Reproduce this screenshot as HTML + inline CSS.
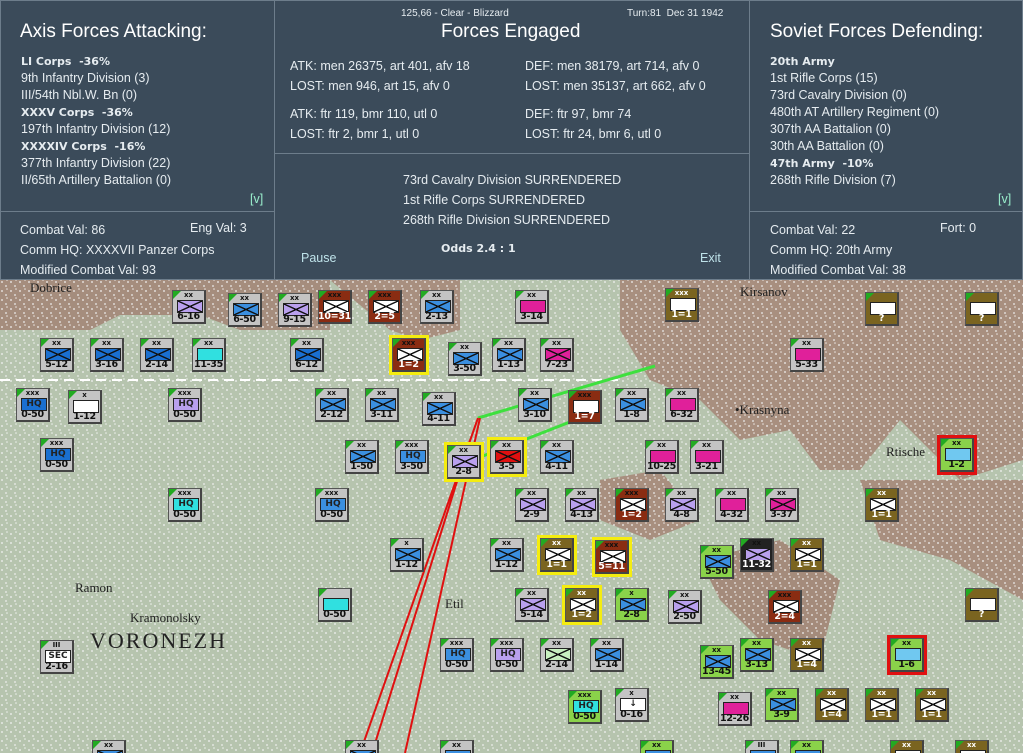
<!DOCTYPE html>
<html><head><meta charset="utf-8"><style>
*{margin:0;padding:0;box-sizing:border-box}
html,body{width:1023px;height:753px;overflow:hidden}
#w{position:relative;width:1023px;height:753px;overflow:hidden;background:#b9c6b3;font-family:"Liberation Sans",sans-serif}
.p{position:absolute;background:#3b4b5a;color:#e6ecf0;border:1px solid #6d7d8b}
.p h1{font-weight:normal;font-size:19px;color:#fff}
.t{position:absolute;font-size:12.5px;line-height:17px;white-space:nowrap}
.b{font-family:"DejaVu Sans",sans-serif;font-weight:bold;font-size:11px}
.c{position:absolute;width:34px;height:34px;background:#c4c4c4;border:1px solid #555;border-right:2px solid #444;border-bottom:2px solid #444;font-family:"DejaVu Sans",sans-serif;font-weight:bold;text-align:center;color:#111;white-space:nowrap}
.c:before{content:"";position:absolute;left:0;top:0;border-left:8px solid #2a2;border-bottom:8px solid transparent}
.c i{position:absolute;left:4px;top:9px;width:26px;height:13px;background:var(--s,#3b8fe0);border:1px solid #222;font-style:normal;font-size:9px;color:#222;line-height:11px}
.c i.x{background:linear-gradient(to top right,transparent 46%,#111 47%,#111 53%,transparent 54%),linear-gradient(to bottom right,transparent 46%,#111 47%,#111 53%,transparent 54%),var(--s,#3b8fe0)}
.c u{position:absolute;left:0;right:0;top:0;font-size:7px;text-decoration:none;line-height:9px}
.c b{position:absolute;left:-3px;right:-3px;bottom:0;font-size:9.5px;line-height:10px;letter-spacing:-.3px}
.o{background:#7a6420;color:#fff}.o i{--s:#fff}.o b,.r b,.k b{color:#fff}
.r{background:#8a2c12}.r i{--s:#fff}
.k{background:#222}
.y{outline:3px solid #f4ec10}
.rd{outline:3px solid #e01010}
</style></head><body><div id="w">
<svg width="1023" height="753" style="position:absolute;left:0;top:0">
<defs><pattern id="sn" width="9" height="9" patternUnits="userSpaceOnUse"><circle cx="2" cy="3" r="1" fill="#f4f4f4"/><circle cx="6" cy="7" r="1" fill="#eee"/><circle cx="7" cy="1" r=".8" fill="#fff"/></pattern></defs>
<rect width="1023" height="753" fill="#b6c4ae"/>
<path d="M0 280H330V330H240L200 315H120L90 330H0Z" fill="#a58d7d"/>
<path d="M620 280H1023V460L960 480L900 420L860 470H820L790 430L740 440L700 400L650 380L620 330Z" fill="#a88f7f"/>
<path d="M860 480L1023 480V600L950 560L880 540Z" fill="#a88f7f"/>
<path d="M700 560L780 540L840 580L820 660L760 640L720 600Z" fill="#a48b7b"/>
<path d="M600 480L660 470L700 520L650 540L600 520Z" fill="#a88f7f"/>
<path d="M330 280H460V330L420 340L390 330Z" fill="#a88f7f"/>
<rect width="1023" height="753" fill="url(#sn)" opacity=".75"/>
<path d="M0 380H620" stroke="#fff" stroke-width="2" stroke-dasharray="10 6"/>
<text x="90" y="648" font-family="Liberation Serif" font-size="22" fill="#222" letter-spacing="2">VORONEZH</text>
<text x="130" y="622" font-family="Liberation Serif" font-size="13" fill="#222">Kramonolsky</text>
<text x="75" y="592" font-family="Liberation Serif" font-size="13" fill="#222">Ramon</text>
<text x="735" y="414" font-family="Liberation Serif" font-size="13" fill="#222">•Krasnyna</text>
<text x="886" y="456" font-family="Liberation Serif" font-size="13" fill="#222">Rtische</text>
<text x="740" y="296" font-family="Liberation Serif" font-size="13" fill="#222">Kirsanov</text>
<text x="445" y="608" font-family="Liberation Serif" font-size="13" fill="#222">Etil</text>
<text x="30" y="292" font-family="Liberation Serif" font-size="13" fill="#222">Dobrice</text>
<path d="M478 418L655 366M460 465L575 420" stroke="#3ee03e" stroke-width="3"/>
<path d="M478 418L360 753M480 418L405 753M470 440L372 753" stroke="#e01010" stroke-width="2"/>
</svg>

<div class="p" style="left:0;top:0;width:275px;height:212px"><h1 style="position:absolute;left:19px;top:20px">Axis Forces Attacking:</h1>
<div class="t" style="left:20px;top:52px"><span class="b">LI Corps &nbsp;-36%</span><br>9th Infantry Division (3)<br>III/54th Nbl.W. Bn (0)<br><span class="b">XXXV Corps &nbsp;-36%</span><br>197th Infantry Division (12)<br><span class="b">XXXXIV Corps &nbsp;-16%</span><br>377th Infantry Division (22)<br>II/65th Artillery Battalion (0)</div>
<div class="t" style="left:249px;top:190px;color:#9ec">[v]</div></div>
<div class="p" style="left:0;top:211px;width:275px;height:69px"><div class="t" style="left:19px;top:8px;line-height:20px">Combat Val: 86<br>Comm HQ: XXXXVII Panzer Corps<br>Modified Combat Val: 93</div><div class="t" style="left:189px;top:8px">Eng Val: 3</div></div>

<div class="p" style="left:274px;top:0;width:476px;height:154px">
<div class="t" style="left:126px;top:4px;font-size:10px">125,66 - Clear - Blizzard</div><div class="t" style="left:352px;top:4px;font-size:10px">Turn:81 &nbsp;Dec 31 1942</div>
<h1 style="position:absolute;left:166px;top:20px">Forces Engaged</h1>
<div class="t" style="left:15px;top:55px;line-height:20px">ATK: men 26375, art 401, afv 18<br>LOST: men 946, art 15, afv 0</div>
<div class="t" style="left:15px;top:103px;line-height:20px">ATK: ftr 119, bmr 110, utl 0<br>LOST: ftr 2, bmr 1, utl 0</div>
<div class="t" style="left:250px;top:55px;line-height:20px">DEF: men 38179, art 714, afv 0<br>LOST: men 35137, art 662, afv 0</div>
<div class="t" style="left:250px;top:103px;line-height:20px">DEF: ftr 97, bmr 74<br>LOST: ftr 24, bmr 6, utl 0</div></div>
<div class="p" style="left:274px;top:153px;width:476px;height:127px">
<div class="t" style="left:128px;top:16px;line-height:20px">73rd Cavalry Division SURRENDERED<br>1st Rifle Corps SURRENDERED<br>268th Rifle Division SURRENDERED</div>
<div class="t b" style="left:166px;top:86px">Odds 2.4 : 1</div>
<div class="t" style="left:26px;top:96px;color:#bfe3ea">Pause</div><div class="t" style="left:425px;top:96px;color:#bfe3ea">Exit</div></div>

<div class="p" style="left:749px;top:0;width:274px;height:212px"><h1 style="position:absolute;left:20px;top:20px">Soviet Forces Defending:</h1>
<div class="t" style="left:20px;top:52px"><span class="b">20th Army</span><br>1st Rifle Corps (15)<br>73rd Cavalry Division (0)<br>480th AT Artillery Regiment (0)<br>307th AA Battalion (0)<br>30th AA Battalion (0)<br><span class="b">47th Army &nbsp;-10%</span><br>268th Rifle Division (7)</div>
<div class="t" style="left:248px;top:190px;color:#9ec">[v]</div></div>
<div class="p" style="left:749px;top:211px;width:274px;height:69px"><div class="t" style="left:20px;top:8px;line-height:20px">Combat Val: 22<br>Comm HQ: 20th Army<br>Modified Combat Val: 38</div><div class="t" style="left:190px;top:8px">Fort: 0</div></div>

<div class="c" style="left:172px;top:290px;--s:#b9a0ee"><u>xx</u><i class="x"></i><b>6-16</b></div>
<div class="c" style="left:228px;top:293px"><u>xx</u><i class="x"></i><b>6-50</b></div>
<div class="c" style="left:278px;top:293px;--s:#b9a0ee"><u>xx</u><i class="x"></i><b>9-15</b></div>
<div class="c r" style="left:318px;top:290px"><u>xxx</u><i class="x"></i><b>10=31</b></div>
<div class="c r" style="left:368px;top:290px"><u>xxx</u><i class="x"></i><b>2=5</b></div>
<div class="c" style="left:420px;top:290px"><u>xx</u><i class="x"></i><b>2-13</b></div>
<div class="c" style="left:515px;top:290px;--s:#e0209a"><u>xx</u><i></i><b>3-14</b></div>
<div class="c o" style="left:665px;top:288px"><u>xxx</u><i></i><b>1=1</b></div>
<div class="c o" style="left:865px;top:292px"><i></i><b>?</b></div>
<div class="c o" style="left:965px;top:292px"><i></i><b>?</b></div>

<div class="c" style="left:40px;top:338px;--s:#1a6fd0"><u>xx</u><i class="x"></i><b>5-12</b></div>
<div class="c" style="left:90px;top:338px;--s:#1a6fd0"><u>xx</u><i class="x"></i><b>3-16</b></div>
<div class="c" style="left:140px;top:338px;--s:#1a6fd0"><u>xx</u><i class="x"></i><b>2-14</b></div>
<div class="c" style="left:192px;top:338px;--s:#30e0e0"><u>xx</u><i></i><b>11-35</b></div>
<div class="c" style="left:290px;top:338px;--s:#1a6fd0"><u>xx</u><i class="x"></i><b>6-12</b></div>
<div class="c r y" style="left:392px;top:338px"><u>xxx</u><i class="x"></i><b>1=2</b></div>
<div class="c" style="left:448px;top:342px"><u>xx</u><i class="x"></i><b>3-50</b></div>
<div class="c" style="left:492px;top:338px"><u>xx</u><i class="x"></i><b>1-13</b></div>
<div class="c" style="left:540px;top:338px;--s:#e0209a"><u>xx</u><i class="x"></i><b>7-23</b></div>
<div class="c" style="left:790px;top:338px;--s:#e0209a"><u>xx</u><i></i><b>5-33</b></div>

<div class="c" style="left:16px;top:388px;--s:#1a6fd0"><u>xxx</u><i>HQ</i><b>0-50</b></div>
<div class="c" style="left:68px;top:390px;--s:#fff"><u>x</u><i></i><b>1-12</b></div>
<div class="c" style="left:168px;top:388px;--s:#b9a0ee"><u>xxx</u><i>HQ</i><b>0-50</b></div>
<div class="c" style="left:315px;top:388px"><u>xx</u><i class="x"></i><b>2-12</b></div>
<div class="c" style="left:365px;top:388px"><u>xx</u><i class="x"></i><b>3-11</b></div>
<div class="c" style="left:422px;top:392px"><u>xx</u><i class="x"></i><b>4-11</b></div>
<div class="c" style="left:518px;top:388px"><u>xx</u><i class="x"></i><b>3-10</b></div>
<div class="c r" style="left:568px;top:390px"><u>xxx</u><i></i><b>1=7</b></div>
<div class="c" style="left:615px;top:388px"><u>xx</u><i class="x"></i><b>1-8</b></div>
<div class="c" style="left:665px;top:388px;--s:#e0209a"><u>xx</u><i></i><b>6-32</b></div>

<div class="c" style="left:40px;top:438px;--s:#1a6fd0"><u>xxx</u><i>HQ</i><b>0-50</b></div>
<div class="c" style="left:345px;top:440px"><u>xx</u><i class="x"></i><b>1-50</b></div>
<div class="c" style="left:395px;top:440px"><u>xxx</u><i>HQ</i><b>3-50</b></div>
<div class="c y" style="left:447px;top:445px;--s:#b9a0ee"><u>xx</u><i class="x"></i><b>2-8</b></div>
<div class="c y" style="left:490px;top:440px;--s:#e01010"><u>xx</u><i class="x"></i><b>3-5</b></div>
<div class="c" style="left:540px;top:440px"><u>xx</u><i class="x"></i><b>4-11</b></div>
<div class="c" style="left:645px;top:440px;--s:#e0209a"><u>xx</u><i></i><b>10-25</b></div>
<div class="c" style="left:690px;top:440px;--s:#e0209a"><u>xx</u><i></i><b>3-21</b></div>
<div class="c rd" style="left:940px;top:438px;background:#8ad24a;--s:#70c8f0"><u>xx</u><i></i><b>1-2</b></div>

<div class="c" style="left:168px;top:488px;--s:#30e0e0"><u>xxx</u><i>HQ</i><b>0-50</b></div>
<div class="c" style="left:315px;top:488px"><u>xxx</u><i>HQ</i><b>0-50</b></div>
<div class="c" style="left:515px;top:488px;--s:#b9a0ee"><u>xx</u><i class="x"></i><b>2-9</b></div>
<div class="c" style="left:565px;top:488px;--s:#b9a0ee"><u>xx</u><i class="x"></i><b>4-13</b></div>
<div class="c r" style="left:615px;top:488px"><u>xxx</u><i class="x"></i><b>1=2</b></div>
<div class="c" style="left:665px;top:488px;--s:#b9a0ee"><u>xx</u><i class="x"></i><b>4-8</b></div>
<div class="c" style="left:715px;top:488px;--s:#e0209a"><u>xx</u><i></i><b>4-32</b></div>
<div class="c" style="left:765px;top:488px;--s:#e0209a"><u>xx</u><i class="x"></i><b>3-37</b></div>
<div class="c o" style="left:865px;top:488px"><u>xx</u><i class="x"></i><b>1=1</b></div>

<div class="c" style="left:390px;top:538px"><u>x</u><i class="x"></i><b>1-12</b></div>
<div class="c" style="left:490px;top:538px"><u>xx</u><i class="x"></i><b>1-12</b></div>
<div class="c o y" style="left:540px;top:538px"><u>xx</u><i class="x"></i><b>1=1</b></div>
<div class="c r y" style="left:595px;top:540px"><u>xxx</u><i class="x"></i><b>5=11</b></div>
<div class="c" style="left:700px;top:545px;background:#8ad24a"><u>xx</u><i class="x"></i><b>5-50</b></div>
<div class="c k" style="left:740px;top:538px;--s:#b9a0ee"><u>xx</u><i class="x"></i><b>11-32</b></div>
<div class="c o" style="left:790px;top:538px"><u>xx</u><i class="x"></i><b>1=1</b></div>

<div class="c" style="left:318px;top:588px;--s:#30e0e0"><i></i><b>0-50</b></div>
<div class="c" style="left:515px;top:588px;--s:#b9a0ee"><u>xx</u><i class="x"></i><b>5-14</b></div>
<div class="c o y" style="left:565px;top:588px"><u>xx</u><i class="x"></i><b>1=2</b></div>
<div class="c" style="left:615px;top:588px;background:#8ad24a"><u>x</u><i class="x"></i><b>2-8</b></div>
<div class="c" style="left:668px;top:590px;--s:#b9a0ee"><u>xx</u><i class="x"></i><b>2-50</b></div>
<div class="c r" style="left:768px;top:590px"><u>xxx</u><i class="x"></i><b>2=4</b></div>
<div class="c o" style="left:965px;top:588px"><i></i><b>?</b></div>

<div class="c" style="left:40px;top:640px;--s:#fff"><u>III</u><i>SEC</i><b>2-16</b></div>
<div class="c" style="left:440px;top:638px"><u>xxx</u><i>HQ</i><b>0-50</b></div>
<div class="c" style="left:490px;top:638px;--s:#b9a0ee"><u>xxx</u><i>HQ</i><b>0-50</b></div>
<div class="c" style="left:540px;top:638px;--s:#c8f0c0"><u>xx</u><i class="x"></i><b>2-14</b></div>
<div class="c" style="left:590px;top:638px"><u>xx</u><i class="x"></i><b>1-14</b></div>
<div class="c" style="left:700px;top:645px;background:#8ad24a"><u>xx</u><i class="x"></i><b>13-45</b></div>
<div class="c" style="left:740px;top:638px;background:#8ad24a"><u>xx</u><i class="x"></i><b>3-13</b></div>
<div class="c o" style="left:790px;top:638px"><u>xx</u><i class="x"></i><b>1=4</b></div>
<div class="c rd" style="left:890px;top:638px;background:#8ad24a;--s:#70c8f0"><u>xx</u><i></i><b>1-6</b></div>

<div class="c" style="left:568px;top:690px;background:#8ad24a;--s:#30e0e0"><u>xxx</u><i>HQ</i><b>0-50</b></div>
<div class="c" style="left:615px;top:688px;--s:#fff"><u>x</u><i>↓</i><b>0-16</b></div>
<div class="c" style="left:718px;top:692px;--s:#e0209a"><u>xx</u><i></i><b>12-26</b></div>
<div class="c" style="left:765px;top:688px;background:#8ad24a"><u>xx</u><i class="x"></i><b>3-9</b></div>
<div class="c o" style="left:815px;top:688px"><u>xx</u><i class="x"></i><b>1=4</b></div>
<div class="c o" style="left:865px;top:688px"><u>xx</u><i class="x"></i><b>1=1</b></div>
<div class="c o" style="left:915px;top:688px"><u>xx</u><i class="x"></i><b>1=1</b></div>

<div class="c" style="left:92px;top:740px"><u>xx</u><i class="x"></i></div>
<div class="c" style="left:345px;top:740px"><u>xx</u><i class="x"></i></div>
<div class="c" style="left:440px;top:740px"><u>xx</u><i></i></div>
<div class="c" style="left:640px;top:740px;background:#8ad24a"><u>xx</u><i></i></div>
<div class="c" style="left:745px;top:740px"><u>III</u><i></i></div>
<div class="c" style="left:790px;top:740px;background:#8ad24a"><u>xx</u><i></i></div>
<div class="c o" style="left:890px;top:740px"><u>xx</u><i></i></div>
<div class="c o" style="left:955px;top:740px"><u>xx</u><i></i></div>
</div></body></html>
